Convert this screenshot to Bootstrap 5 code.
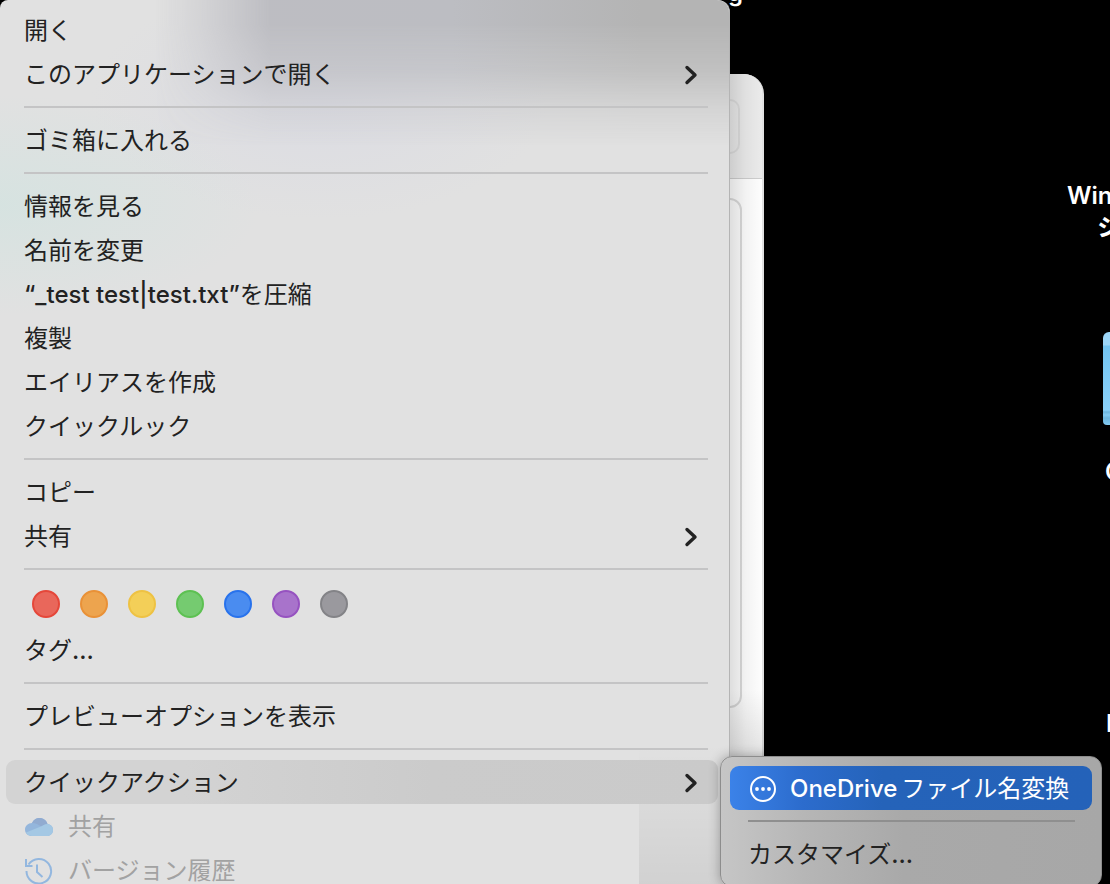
<!DOCTYPE html>
<html lang="ja">
<head>
<meta charset="utf-8">
<meta name="viewport" content="width=device-width, initial-scale=1">
<title>Finder</title>
<link href="https://cdn.jsdelivr.net/npm/bootstrap@5.3.0/dist/css/bootstrap.min.css" rel="stylesheet">
<style>
body{background:#000;font-family:Inter,"Noto Sans CJK JP",sans-serif;color:#222}
.desktop{width:1110px;height:884px}
.desk-label{color:#fff;font-weight:600;font-size:24px;line-height:32px;white-space:nowrap}
/* Finder window behind the menu */
.finder{left:500px;top:74px;width:264px;height:830px;border-radius:20px;background:#fff;border-right:2px solid #e2e2e2}
.finder-bar{height:105px;background:#ececec;border-bottom:1px solid #cfcfcf;padding-top:25px}
.finder-search{width:240px;height:55px;border:2px solid #dedede;border-radius:10px}
.finder-pane{width:242px;height:510px;margin-top:19px;border:2px solid #dcdcdc;border-radius:12px}
.finder-shade{left:730px;top:74px;width:34px;height:720px;border-top-right-radius:20px;background:linear-gradient(90deg,rgba(0,0,0,.13),rgba(0,0,0,.05) 45%,rgba(0,0,0,0))}
.finder-shade2{left:730px;top:690px;width:34px;height:66px;background:linear-gradient(rgba(0,0,0,0),rgba(0,0,0,.1))}
/* context menu */
.ctx{left:0;top:0;width:730px;height:884px;padding:8px 12px 0 6px;border-radius:8px 12px 0 0;border-right:1px solid #b4b4b4;
 background:
 radial-gradient(ellipse 260px 110px at 0 205px,rgba(205,228,224,.55),rgba(205,228,224,0)),
 radial-gradient(ellipse 230px 120px at 320px 100px,rgba(216,217,228,.6),rgba(216,217,228,0)),
 linear-gradient(0deg,rgba(0,0,0,.07),transparent 140px) right bottom/90px 140px no-repeat,
 #e1e1e1}
.ctx-glow{left:0;top:0;width:729px;height:150px;border-top-right-radius:12px;background:linear-gradient(90deg,#bdbdc2 30%,#bcbdc2 62%,#b4b4b4 88%);
 -webkit-mask-image:linear-gradient(90deg,transparent 155px,rgba(0,0,0,.35) 200px,#000 270px),linear-gradient(#000 25px,rgba(0,0,0,.72) 70px,rgba(0,0,0,.28) 108px,transparent 146px);
 -webkit-mask-composite:source-in;mask-composite:intersect}
.ctx-item{height:44px;padding:2px 18px 0 18px;font-size:24px;line-height:42px;border-radius:9px;white-space:nowrap;margin-right:-1px}
.ctx-item .lat{font-weight:500}
.ctx-item.open{background:linear-gradient(90deg,#d3d3d3 25%,#cbcbcb 60%,#cacaca)}
.ctx-item.off{color:#a2a2a2}
.ctx-sep{height:2px;margin:10px 9px 10px 18px;background:#c4c4c5}
.chev{width:14px;height:22px;margin-right:2px}
.tags{height:48px;padding-left:26px;gap:20px}
.dot{width:28px;height:28px;border-radius:50%;border:2px solid}
.tag-item{margin-bottom:6px}
/* submenu */
.sub{left:720px;top:756px;width:382px;height:131px;border-radius:12px;padding:9px;border:1px solid #8d8d8d;background:linear-gradient(90deg,#c6c6c6,#b6b6b6 22%,#a9a9a9 48%,#a7a7a7);box-shadow:0 0 12px rgba(0,0,0,.3)}
.sub .pick{color:#fff;background:linear-gradient(90deg,#3b82e8,#2c6ccd 20%,#2563b9 42%,#2462b9);padding-left:20px;margin-right:0}
.sub .ctx-sep{background:#8f8f8f;margin:10px 17px 10px 18px}
.folder{left:1103px;top:332px;width:60px;height:93px;border-radius:6px 6px 4px 4px;background:linear-gradient(#9cd6f8 0 13px,#73c4f1 14px,#8ad1fa 78px,#6db5dd 80px,#83cbf3 83px,#6db5dd 86px,#83cbf3)}
</style>
</head>
<body>
<main class="desktop position-relative overflow-hidden">
  <div class="desk-label position-absolute" style="left:728px;top:-23px">g</div>
  <div class="desk-label position-absolute" style="left:1067px;top:180px">Windows</div>
  <div class="desk-label position-absolute" style="left:1097px;top:212px">ショートカット</div>
  <div class="folder position-absolute"></div>
  <div class="desk-label position-absolute" style="left:1105px;top:456px">OneDrive</div>
  <div class="desk-label position-absolute" style="left:1106px;top:708px">Link</div>

  <section class="finder position-absolute overflow-hidden">
    <div class="finder-bar"><div class="finder-search"></div></div>
    <div class="finder-pane"></div>
  </section>
  <div class="finder-shade position-absolute"></div>
  <div class="finder-shade2 position-absolute"></div>

  <nav class="ctx position-absolute">
    <div class="ctx-glow position-absolute"></div>
    <div class="position-relative">
      <div class="ctx-item">開く</div>
      <div class="ctx-item d-flex align-items-center justify-content-between"><span>このアプリケーションで開く</span><svg class="chev" viewBox="0 0 14 22"><path d="M3 3.5 11 11 3 18.500" fill="none" stroke="#222" stroke-width="3.4" stroke-linecap="round" stroke-linejoin="round"/></svg></div>
      <div class="ctx-sep"></div>
      <div class="ctx-item">ゴミ箱に入れる</div>
      <div class="ctx-sep"></div>
      <div class="ctx-item">情報を見る</div>
      <div class="ctx-item">名前を変更</div>
      <div class="ctx-item"><span class="lat">“_test test|test.txt”</span>を圧縮</div>
      <div class="ctx-item">複製</div>
      <div class="ctx-item">エイリアスを作成</div>
      <div class="ctx-item">クイックルック</div>
      <div class="ctx-sep"></div>
      <div class="ctx-item">コピー</div>
      <div class="ctx-item d-flex align-items-center justify-content-between"><span>共有</span><svg class="chev" viewBox="0 0 14 22"><path d="M3 3.5 11 11 3 18.500" fill="none" stroke="#222" stroke-width="3.4" stroke-linecap="round" stroke-linejoin="round"/></svg></div>
      <div class="ctx-sep"></div>
      <div class="tags d-flex align-items-center">
        <span class="dot" style="background:#e9675b;border-color:#e5473a"></span>
        <span class="dot" style="background:#eda44e;border-color:#e99137"></span>
        <span class="dot" style="background:#f3cf58;border-color:#eec243"></span>
        <span class="dot" style="background:#75cb70;border-color:#5dc152"></span>
        <span class="dot" style="background:#4a8cf0;border-color:#2872ec"></span>
        <span class="dot" style="background:#a873cb;border-color:#9652c0"></span>
        <span class="dot" style="background:#9a999e;border-color:#838387"></span>
      </div>
      <div class="ctx-item tag-item">タグ<span class="lat">...</span></div>
      <div class="ctx-sep"></div>
      <div class="ctx-item">プレビューオプションを表示</div>
      <div class="ctx-sep"></div>
      <div class="ctx-item open d-flex align-items-center justify-content-between"><span>クイックアクション</span><svg class="chev" viewBox="0 0 14 22"><path d="M3 3.5 11 11 3 18.500" fill="none" stroke="#222" stroke-width="3.4" stroke-linecap="round" stroke-linejoin="round"/></svg></div>
      <div class="ctx-item off d-flex align-items-center">
        <svg width="30" height="20" viewBox="0 0 30 20" style="margin-right:14px"><path d="M8 6C10 2 13 1 15.500 1c4 0 7 2.500 8 6 3.500.3 5.500 3 5.500 6 0 3.500-2.500 6-6 6H8c-4 0-7-2.500-7-6.500C1 9 4 6 8 6Z" fill="#94b6dc"/><path d="M8 6C10 2 13 1 15.500 1c4 0 7 2.500 8 6-3 0-4 1-6 2.500C14 7.500 11 5.800 8 6Z" fill="#91abd0"/><path d="M2 15.500 17.500 9.300C19.500 8 21 7 23.500 7c3.500.3 5.500 3 5.500 6 0 3.500-2.500 6-6 6H8c-3 0-5-1.300-6-3.500Z" fill="#a4c8e4"/></svg><span>共有</span></div>
      <div class="ctx-item off d-flex align-items-center">
        <svg width="30" height="30" viewBox="0 0 30 30" style="margin-right:14px" fill="none" stroke="#93b7df" stroke-width="2"><path d="M4.500 8.500A12.300 12.300 0 1 1 2.500 15M2 3v7h6.500M13 8.500V16l5.500 5"/></svg><span>バージョン履歴</span></div>
    </div>
  </nav>

  <nav class="sub position-absolute">
    <div class="ctx-item pick d-flex align-items-center">
      <svg width="26" height="26" viewBox="0 0 26 26" style="margin-right:14px"><circle cx="13" cy="13" r="12" fill="none" stroke="#fff" stroke-width="2"/><g fill="#fff"><circle cx="7" cy="13" r="1.900"/><circle cx="13" cy="13" r="1.900"/><circle cx="19" cy="13" r="1.900"/></g></svg>
      <span class="lat">OneDrive</span><span class="ms-1">ファイル名変換</span>
    </div>
    <div class="ctx-sep"></div>
    <div class="ctx-item">カスタマイズ<span class="lat">...</span></div>
  </nav>
</main>
<script src="https://cdn.jsdelivr.net/npm/bootstrap@5.3.0/dist/js/bootstrap.bundle.min.js"></script>
</body>
</html>
